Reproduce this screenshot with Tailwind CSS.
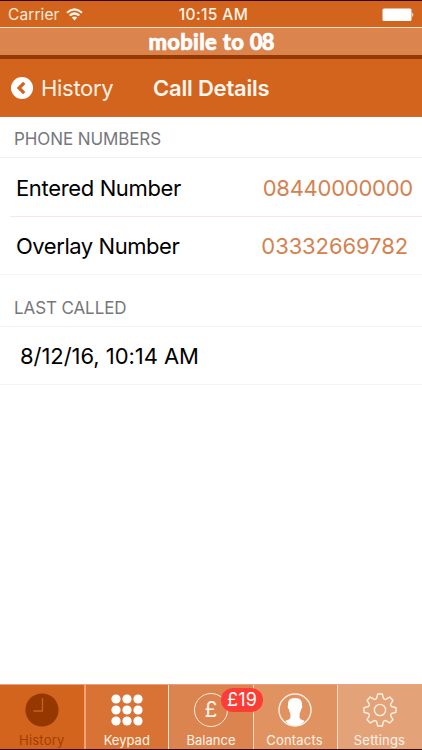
<!DOCTYPE html>
<html lang="en">
<head>
<meta charset="utf-8">
<title>Call Details</title>
<script src="https://cdn.jsdelivr.net/npm/@tailwindcss/browser@4"></script>
</head>
<body class="w-[422px] h-[750px] overflow-hidden bg-white font-['Inter',sans-serif] text-black flex flex-col whitespace-nowrap">
<header class="bg-[#d3641d] text-white shrink-0">
  <div class="h-[27px] border-t border-[#300806] grid grid-cols-3 items-center pl-2 pr-2 pt-[2px] text-[15.5px]">
    <div class="flex items-center gap-[6px] text-[#ffebdc]"><span class="tracking-[0.1px]">Carrier</span>
      <svg class="-mt-[2px]" width="17" height="13" viewBox="0 0 17 13" fill="none" stroke="#fff4e9" stroke-width="2.2"><path d="M1 4.7Q8.500-2 16 4.700M3.700 7.500q4.800-4 9.600 0"/><path d="M5.800 9.600q2.700-2 5.400 0L8.500 12.500Z" fill="#fff4e9" stroke="none"/></svg></div>
    <span class="text-center font-medium text-[#fff4e9] tracking-[0.4px] pl-[5px]">10:15 AM</span>
    <svg class="justify-self-end" width="32" height="14" viewBox="0 0 32 14" fill="#fff"><rect x="0.500" y="0.500" width="29" height="12.500" rx="1.500"/><path d="M30.300 4.500q2 2 0 4.500Z"/></svg>
  </div>
  <div class="h-8 border-t border-[#ffe0c6] bg-[#dc844e] border-b-4 border-b-[#963900] flex items-center justify-center font-['Lato',sans-serif] font-black text-[22px] leading-none"><span class="[-webkit-text-stroke:0.6px_white] tracking-[0.3px]">mobile to <span class="tracking-[-0.8px]">08</span></span></div>
  <nav class="h-[58px] border-b border-[#c66b3b] flex items-center text-[22px] pl-[11px]">
    <svg width="22" height="22" viewBox="0 0 22 22"><circle cx="11" cy="11" r="11" fill="#fff"/><path d="m13.200 5.800-5.200 5.200 5.200 5.200" fill="none" stroke="#d3641d" stroke-width="3.200"/></svg>
    <span class="ml-2 w-[112px] pt-[2px] tracking-[-0.3px] text-[#fff0e2]">History</span>
    <h1 class="font-semibold pt-[2px] tracking-[-0.2px] text-[#fff7ef]">Call Details</h1>
  </nav>
</header>
<main class="flex-1 text-[22px]">
  <h2 class="h-[41px] flex items-center pl-[14px] pt-[5px] text-[17px] tracking-[-0.1px] text-[#77777b] border-b border-[#f5f0f0]"><span>PHONE NUMBERS</span></h2>
  <div class="ml-[10px] h-[59px] flex items-center justify-between pt-[2px] pl-[6px] pr-[9px] border-b border-[#f8e9e6]"><span class="tracking-[-0.35px]">Entered Number</span><span class="tracking-[-0.25px] text-[#d58150]">08440000000</span></div>
  <div class="h-[58px] flex items-center justify-between pt-[2px] pl-4 pr-[14px] border-b border-[#f5f3f3]"><span class="tracking-[-0.45px]">Overlay Number</span><span class="tracking-[-0.1px] text-[#d58150]">03332669782</span></div>
  <h2 class="h-[52px] flex items-end pb-[5px] pl-[14px] text-[17px] tracking-[-0.1px] text-[#77777b] border-b border-[#f5f3f3]"><span>LAST CALLED</span></h2>
  <div class="h-[58px] flex items-center pt-[2px] pl-5 border-b border-[#f5f3f3]"><span class="tracking-[-0.05px]">8/12/16, 10:14 AM</span></div>
</main>
<footer class="h-[66px] shrink-0 border-t border-t-[#e9a37c] border-b border-b-[#300806] flex text-[13px] leading-[16px] tracking-[0.2px] text-[#fff3e9]">
  <div class="w-[85.500px] bg-[#d3641d] border-r-2 border-[#efa273] flex flex-col items-center pt-2 gap-[5px] text-[#a23f00]">
    <svg width="34" height="34" viewBox="0 0 34 34"><circle cx="17" cy="17" r="16.600" fill="#943800"/><path d="M17.500 5v13H8.500" fill="none" stroke="#c9601d" stroke-width="1.300"/></svg><span>History</span></div>
  <div class="w-[83.500px] bg-[#d87335] border-r border-[#ffe0ca] flex flex-col items-center pt-2 gap-[5px]">
    <svg width="34" height="34" viewBox="0 0 34 34" fill="#fff"><circle cx="6" cy="6" r="4.600"/><circle cx="17" cy="6" r="4.600"/><circle cx="28" cy="6" r="4.600"/><circle cx="6" cy="17" r="4.600"/><circle cx="17" cy="17" r="4.600"/><circle cx="28" cy="17" r="4.600"/><circle cx="6" cy="28" r="4.600"/><circle cx="17" cy="28" r="4.600"/><circle cx="28" cy="28" r="4.600"/></svg><span class="tracking-normal">Keypad</span></div>
  <div class="w-[85px] bg-[#dc8450] border-r border-[#ffe0ca] flex flex-col items-center pt-2 gap-[5px] relative">
    <div class="w-[34px] h-[34px] border-[1.500px] border-[#ffe9d8] rounded-full flex items-center justify-center text-[21px]">£</div><span class="tracking-normal">Balance</span>
    <span class="absolute z-10 left-[52px] top-[3px] w-[42px] h-[24px] rounded-full bg-[#fc3d35] text-white text-[18px] flex items-center justify-center">£19</span></div>
  <div class="w-[84px] bg-[#e09361] border-r border-[#ffe0ca] flex flex-col items-center pt-2 gap-[5px]">
    <svg class="-ml-[2px]" width="34" height="34" viewBox="0 0 34 34"><circle cx="17" cy="17" r="16" fill="none" stroke="#fff0e4" stroke-width="1.400"/><path d="M17 5c-5.500 0-7.500 3-6.900 7.500-.9.500-.3 3.200.8 3.700.4 2 .8 3 1.500 4.300v4.300c-.8 2-3 2.200-5.100 3.200Q11 32.500 17 32.500t9.700-4.500c-2.100-1-4.300-1.200-5.100-3.200v-4.300c.7-1.300 1.100-2.300 1.500-4.300 1.100-.5 1.700-3.200.8-3.700C24.500 8 22.500 5 17 5Z" fill="#fff"/></svg><span class="-ml-[2px]">Contacts</span></div>
  <div class="w-[84px] bg-[#e4a279] flex flex-col items-center pt-2 gap-[5px]">
    <svg class="-ml-px" width="34" height="34" viewBox="-17 -17 34 34" fill="none" stroke="#fff0e4" stroke-width="1.400" stroke-linejoin="round"><path d="M-3.500-11.500-2.300-16H2.300L3.500-11.500Q4.500-10.400 5.700-10.600L9.700-12.900 12.900-9.700 10.600-5.700Q10.400-4.500 11.500-3.500L16-2.300V2.300L11.500 3.500Q10.400 4.500 10.600 5.700L12.900 9.700 9.700 12.900 5.700 10.600Q4.500 10.400 3.500 11.500L2.300 16H-2.300L-3.500 11.500Q-4.500 10.400-5.700 10.600L-9.700 12.900-12.900 9.700-10.600 5.700Q-10.400 4.500-11.500 3.500L-16 2.300V-2.300L-11.500-3.500Q-10.400-4.500-10.600-5.700L-12.900-9.700-9.700-12.900-5.700-10.600Q-4.500-10.400-3.500-11.500Z"/><circle r="5.600"/></svg><span class="-ml-px">Settings</span></div>
</footer>
</body>
</html>
